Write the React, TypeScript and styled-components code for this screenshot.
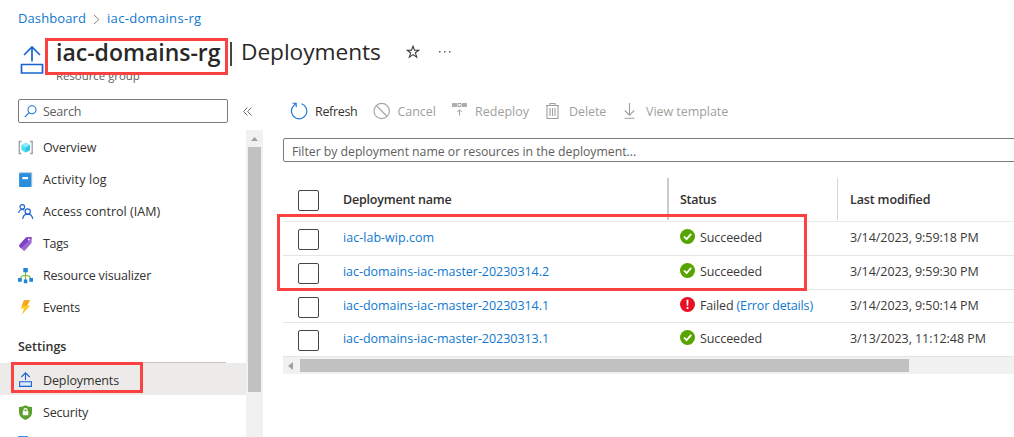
import React from 'react';
import styled, { createGlobalStyle, css } from 'styled-components';

const Global = createGlobalStyle`
  * { box-sizing: border-box; }
  body { margin: 0; background: #fff; overflow: hidden; }
`;

const Page = styled.div`
  position: relative;
  width: 1014px;
  height: 437px;
  overflow: hidden;
  display: flex;
  flex-direction: column;
  background: #fff;
  color: #323130;
  font: 12.5px/16px 'Open Sans', 'Noto Sans', sans-serif;
  white-space: nowrap;
`;

const Text = styled.span<{ $track?: number }>`
  letter-spacing: ${p => p.$track ?? 0}px;
`;

const Link = styled(Text)`
  color: #0f78d0;
`;

const Breadcrumb = styled.nav`
  display: flex;
  align-items: center;
  height: 36px;
  padding-left: 18px;
  font-size: 13px;
`;

const Chevron = styled.svg`
  margin: 2px 7px 0 7px;
`;

const TitleBar = styled.header`
  display: flex;
  height: 58px;
  padding-left: 20px;
`;

const TitleIcon = styled.svg`
  margin: 8px 12px 0 0;
`;

const TitleBlock = styled.div`
  display: flex;
  flex-direction: column;
`;

const TitleLine = styled.h1`
  display: flex;
  align-items: center;
  height: 32px;
  margin: 0;
  font-size: 22.7px;
  line-height: 32px;
  font-weight: 400;
  color: #292827;
`;

const Name = styled.span`
  width: 173px;
  font-size: 23px;
  font-weight: 600;
`;

const Divider = styled.i`
  width: 2px;
  height: 24px;
  margin: 3px 9px 0 1px;
  background: #4a4440;
`;

const Subtitle = styled.div`
  font-size: 11.4px;
  line-height: 16px;
  color: #605e5c;
`;

const Body = styled.div`
  display: flex;
  flex: 1;
  min-height: 0;
`;

const Sidebar = styled.aside`
  display: flex;
  flex-direction: column;
  width: 263px;
`;

const SearchRow = styled.div`
  display: flex;
  align-items: center;
  height: 36px;
  padding: 0 0 2px 18px;
`;

const SearchBox = styled.div`
  display: flex;
  align-items: center;
  gap: 6px;
  width: 210px;
  height: 24px;
  margin-right: 15px;
  padding: 1px 0 0 5px;
  border: 1px solid #7d7b79;
  border-radius: 2px;
  color: #605e5c;
`;

const MenuArea = styled.div`
  display: flex;
  flex: 1;
  min-height: 0;
`;

const Menu = styled.div`
  width: 246px;
  padding-top: 1px;
  overflow: hidden;
`;

const MenuItem = styled.div<{ $active?: boolean; $top?: number }>`
  display: flex;
  align-items: center;
  gap: 9px;
  height: 32px;
  padding: ${p => p.$top ?? 2}px 0 0 18px;
  background: ${p => (p.$active ? '#edebe9' : 'transparent')};
  > svg { margin-top: -1px; }
`;

const MenuHeading = styled.div`
  height: 40px;
  margin: 0 20px 0 18px;
  padding-top: 16px;
  border-bottom: 1px solid #c4c2c0;
  font-weight: 600;
`;

const VScroll = styled.div`
  display: flex;
  flex-direction: column;
  align-items: center;
  width: 17px;
  background: #f1f1f1;
`;

const VThumb = styled.div`
  width: 13px;
  height: 245px;
  margin-top: 6px;
  background: #c1c1c1;
`;

const Content = styled.main`
  display: flex;
  flex-direction: column;
  flex: 1;
  min-width: 0;
  padding-left: 20px;
`;

const Toolbar = styled.div`
  display: flex;
  align-items: center;
  height: 44px;
  padding: 0 0 9px 7px;
`;

const Command = styled.div<{ $width: number; $off?: boolean }>`
  display: flex;
  align-items: center;
  gap: 7px;
  width: ${p => p.$width}px;
  color: ${p => (p.$off ? '#a19f9d' : '#323130')};
  > svg { margin-top: -2px; }
`;

const Filter = styled.div`
  display: flex;
  align-items: center;
  flex: none;
  width: 740px;
  height: 24px;
  padding: 3px 0 0 8px;
  border: 1px solid #7d7b79;
  border-radius: 2px;
  font-size: 12.3px;
  color: #605e5c;
`;

const columns = css`
  display: grid;
  grid-template-columns: 60px 325px 170px 1fr;
`;

const HeadRow = styled.div`
  ${columns}
  height: 44px;
  margin-top: 16px;
  border-bottom: 1px solid #edebe9;
  font-weight: 600;
`;

const HeadCell = styled.div<{ $rule?: string; $thick?: number }>`
  padding: 14px 0 0 ${p => (p.$rule ? 13 - (p.$thick ?? 1) : 0)}px;
  margin-bottom: 1px;
  ${p => p.$rule && css`
    margin-left: -1px;
    border-left: ${p.$thick ?? 1}px solid ${p.$rule};
  `}
`;

const Row = styled.div<{ $height: number }>`
  ${columns}
  height: ${p => p.$height}px;
  border-bottom: 1px solid #e6e5e4;
`;

const Cell = styled.div<{ $inset?: number }>`
  display: flex;
  height: 16px;
  margin-top: 8px;
  padding-left: ${p => p.$inset ?? 0}px;
  color: #3b3a39;
`;

const Check = styled.div<{ $top: number }>`
  width: 21px;
  height: 21px;
  margin: ${p => p.$top}px 0 0 15px;
  border: 1px solid #484644;
  border-radius: 2px;
`;

const StatusMark = styled.svg`
  margin: -1px 5px 0 0;
`;

const HScroll = styled.div`
  display: flex;
  align-items: center;
  height: 17px;
  padding-left: 5px;
  background: #f1f1f1;
`;

const HThumb = styled.div`
  width: 609px;
  height: 13px;
  margin-left: 7px;
  background: #c1c1c1;
`;

const Highlight = styled.div<{ $x: number; $y: number; $w: number; $h: number }>`
  position: absolute;
  left: ${p => p.$x}px;
  top: ${p => p.$y}px;
  width: ${p => p.$w}px;
  height: ${p => p.$h}px;
  border: 3px solid #fc4141;
`;

const Overview = () => (
  <svg width="16" height="16" viewBox="0 0 16 16">
    <path d="M3.500 1.500H1.300v12h2.200M12 1.500h2.200v12H12" fill="none" stroke="#a3a3a3" strokeWidth="1.400" />
    <path d="M7.700 2.700l4.300 2.400v5l-4.300 2.500-4.300-2.500v-5z" fill="#4fdcf7" />
    <path d="M7.700 2.700l4.300 2.400-4.300 2.500-4.300-2.500z" fill="#8becfc" />
    <path d="M7.700 7.600l4.300-2.500v5l-4.300 2.500z" fill="#32c3e8" />
  </svg>
);
const Log = () => (
  <svg width="16" height="16" viewBox="0 0 16 16">
    <rect x="1.200" y=".3" width="13" height="14.700" rx="1" fill="#9dbdd6" />
    <rect x="1.200" y="1.300" width="11.800" height="13.700" rx=".8" fill="#2b8edc" />
    <rect x="4.300" y="5" width="5.700" height="2.200" fill="#fff" />
  </svg>
);
const Access = () => (
  <svg width="16" height="16" viewBox="0 0 16 16" fill="none" stroke="#1f66d6" strokeWidth="1.200">
    <circle cx="4.300" cy="2.900" r="2.300" />
    <path d="M.7 9C1 7 2.300 5.500 4.300 5.500q1.200 0 2 .6" />
    <circle cx="9.700" cy="7.500" r="2.600" />
    <path d="M4.700 15c.3-3 2.200-4.800 5-4.800s4.600 1.800 5 4.800" />
  </svg>
);
const Tag = () => (
  <svg width="16" height="16" viewBox="0 0 16 16">
    <path d="M8 1.600L12.700.9q1 0 1 1l-.2 5.200-6.500 7.300q-.8.700-1.600 0L1.400 10.500q-.7-.8 0-1.600z" fill="#9d68d4" />
    <path d="M8 1.600L12.700.9q1 0 1 1L3 12.200 1.400 10.500q-.7-.8 0-1.600z" fill="#7c42c2" />
    <circle cx="10.800" cy="3.500" r=".9" fill="#fff" />
  </svg>
);
const Visualizer = () => (
  <svg width="16" height="16" viewBox="0 0 16 16">
    <path d="M7.500 4v8M2.500 11c0-3 2-3.700 5-3.700s5 .7 5 3.700" fill="none" stroke="#7fc241" strokeWidth="1.200" />
    <path d="M5.300 0h4.500v4.300H5.300zM0 10h3.800v3.700H0zM5.800 11.500h3.500v3.700H5.800zM11.300 10H15v3.700h-3.700z" fill="#2086dc" />
  </svg>
);
const Bolt = () => (
  <svg width="16" height="16" viewBox="0 0 16 16">
    <path d="M6 .2h6L9 5.500h3.300L3.500 15l2.700-6.500H2.700z" fill="#fbc91d" />
    <path d="M6 .2h6L9 5.500H4z" fill="#f9a21d" />
  </svg>
);
const Upload = () => (
  <svg width="16" height="16" viewBox="0 0 16 16" fill="none" stroke="#1763d6" strokeWidth="1.100">
    <path d="M7.500 8V.8M3.300 5L7.500.8 11.700 5" />
    <path d="M1.600 9.800h11.800v4.600H1.600z" fill="#dfeafa" />
  </svg>
);
const Shield = () => (
  <svg width="16" height="16" viewBox="0 0 16 16">
    <path d="M7.500.3Q10.500 2.300 14 2.100v5.400q0 4.500-6.500 7.500Q1 12 1 7.500V2.100Q4.500 2.300 7.500.3z" fill="#5ba02e" />
    <path d="M5.900 7V5.200a1.600 1.600 0 013.200 0V7" fill="none" stroke="#fff" strokeWidth="1.100" />
    <rect x="4.700" y="6.300" width="5.600" height="4" rx=".5" fill="#fff" />
  </svg>
);
const Blue = () => (
  <svg width="16" height="16" viewBox="0 0 16 16"><path d="M0 1h10v14H0z" fill="#3a96e0" /></svg>
);

const icon18 = { width: 18, height: 18, viewBox: '0 0 18 18', fill: 'none' };
const Refresh = () => (
  <svg {...icon18} stroke="#1a73d8" strokeWidth="1.100">
    <path d="M11.500 1.800A7.700 7.700 0 112.900 4.600M6.200 1v4.200M6.500 1.200H2.500M6.200 1.200L2.900 4.600" />
  </svg>
);
const Cancel = () => (
  <svg {...icon18} stroke="#a9a7a5" strokeWidth="1.200">
    <circle cx="8.700" cy="9" r="7.700" /><path d="M3.300 3.500l10.900 11" />
  </svg>
);
const Redeploy = () => (
  <svg {...icon18}>
    <path d="M2 1h5v4H2zM12 1h5v4h-5z" fill="#b0aeac" />
    <path d="M8 1.500h3v3H8zM9.500 13.500V8M7.300 10l2.200-2.200 2.200 2.200" stroke="#a19f9d" />
  </svg>
);
const Trash = () => (
  <svg {...icon18} stroke="#a19f9d" strokeWidth="1.100">
    <path d="M2 3.500h13M6 3.200V1.500h5v1.700M3 3.500v13h11v-13M6 6v8M8.500 6v8M11 6v8" />
  </svg>
);
const Download = () => (
  <svg {...icon18} stroke="#a19f9d" strokeWidth="1.100">
    <path d="M8.500 1v12.200M3.800 8.500l4.700 4.700 4.700-4.700M3.500 16.200h10" />
  </svg>
);

const menu = [
  { label: 'Overview', icon: <Overview />, track: -0.12 },
  { label: 'Activity log', icon: <Log />, track: 0.12 },
  { label: 'Access control (IAM)', icon: <Access />, track: 0.02 },
  { label: 'Tags', icon: <Tag />, track: -0.3 },
  { label: 'Resource visualizer', icon: <Visualizer />, track: -0.18 },
  { label: 'Events', icon: <Bolt />, track: -0.2 },
];

const commands = [
  { label: 'Refresh', icon: <Refresh />, width: 82.500, track: -0.32 },
  { label: 'Cancel', icon: <Cancel />, width: 77.500, track: -0.05, off: true },
  { label: 'Redeploy', icon: <Redeploy />, width: 94, track: 0, off: true },
  { label: 'Delete', icon: <Trash />, width: 77, track: -0.08, off: true },
  { label: 'View template', icon: <Download />, width: 120, track: -0.05, off: true },
];

const rows = [
  { name: 'iac-lab-wip.com', ok: true, date: '3/14/2023, 9:59:18 PM', height: 34, track: 0.03 },
  { name: 'iac-domains-iac-master-20230314.2', ok: true, date: '3/14/2023, 9:59:30 PM', height: 34, track: -0.04 },
  { name: 'iac-domains-iac-master-20230314.1', ok: false, date: '3/14/2023, 9:50:14 PM', height: 33, track: -0.04 },
  { name: 'iac-domains-iac-master-20230313.1', ok: true, date: '3/13/2023, 11:12:48 PM', height: 34, track: -0.04 },
];

const Mark = ({ ok }: { ok: boolean }) => (
  <StatusMark width="15" height="15" viewBox="0 0 15 15">
    <circle cx="7.500" cy="7.500" r="7.500" fill={ok ? '#57a300' : '#e81123'} />
    {ok
      ? <path d="M4 7.500l2.600 2.700 4.600-5.400" fill="none" stroke="#fff" strokeWidth="1.800" />
      : <path d="M6.500 2.800h2l-.3 5.900H6.800zM6.600 10h1.800v1.900H6.600z" fill="#fff" />}
  </StatusMark>
);

const Star = styled.svg`
  margin-left: 25px;
`;

const Dots = styled.svg`
  margin-left: 18px;
`;

const ScrollUp = styled.svg`
  margin-top: 7px;
`;

export default function App() {
  return (
    <Page>
      <Global />
      <Breadcrumb>
        <Link $track={0.1}>Dashboard</Link>
        <Chevron width="7" height="11" viewBox="0 0 7 11"><path d="M1 1l5 4.500L1 10" fill="none" stroke="#8a8886" /></Chevron>
        <Link $track={0.32}>iac-domains-rg</Link>
      </Breadcrumb>
      <TitleBar>
        <TitleIcon width="24" height="30" viewBox="0 0 24 30" fill="none" stroke="#1763d6" strokeWidth="1.700">
          <path d="M12 17.500V3M4 11l8-8 8 8M1.500 20.500h21v8.500h-21z" />
        </TitleIcon>
        <TitleBlock>
          <TitleLine>
            <Name>iac-domains-rg</Name>
            <Divider />
            <Text $track={-0.05}>Deployments</Text>
            <Star width="14" height="14" viewBox="0 0 14 14" fill="none" stroke="#3b3a39" strokeWidth="1.100">
              <path d="M7 1.200l1.500 4h4.300L9.400 7.800l1.300 4.400L7 9.600l-3.700 2.600 1.300-4.400L1.200 5.200h4.300z" />
            </Star>
            <Dots width="14" height="4" viewBox="0 0 14 4" fill="#605e5c">
              <path d="M1 1h1.500v1.500H1zM6 1h1.500v1.500H6zM11 1h1.500v1.500H11z" />
            </Dots>
          </TitleLine>
          <Subtitle>Resource group</Subtitle>
        </TitleBlock>
      </TitleBar>
      <Body>
        <Sidebar>
          <SearchRow>
            <SearchBox>
              <svg width="13" height="13" viewBox="0 0 13 13" fill="none" stroke="#1a78d0" strokeWidth="1.100">
                <circle cx="8" cy="4.800" r="4" /><path d="M5.200 7.700L.8 12" />
              </svg>
              <Text $track={-0.25}>Search</Text>
            </SearchBox>
            <svg width="9" height="9" viewBox="0 0 9 9" fill="none" stroke="#605e5c" strokeWidth=".9">
              <path d="M4.300.5l-3.600 4 3.600 4M8.300.5l-3.600 4 3.600 4" />
            </svg>
          </SearchRow>
          <MenuArea>
            <Menu>
              {menu.map(m => (
                <MenuItem key={m.label}>{m.icon}<Text $track={m.track}>{m.label}</Text></MenuItem>
              ))}
              <MenuHeading>Settings</MenuHeading>
              <MenuItem $active $top={3}><Upload /><Text $track={-0.12}>Deployments</Text></MenuItem>
              <MenuItem $top={4}><Shield /><Text $track={-0.18}>Security</Text></MenuItem>
              <MenuItem $top={1}><Blue /></MenuItem>
            </Menu>
            <VScroll>
              <ScrollUp width="7" height="4" viewBox="0 0 7 4"><path d="M0 4l3.500-4L7 4z" fill="#a0a0a0" /></ScrollUp>
              <VThumb />
            </VScroll>
          </MenuArea>
        </Sidebar>
        <Content>
          <Toolbar>
            {commands.map(c => (
              <Command key={c.label} $width={c.width} $off={c.off}>{c.icon}<Text $track={c.track}>{c.label}</Text></Command>
            ))}
          </Toolbar>
          <Filter><Text $track={-0.04}>Filter by deployment name or resources in the deployment...</Text></Filter>
          <HeadRow>
            <Check $top={12} />
            <HeadCell><Text $track={-0.2}>Deployment name</Text></HeadCell>
            <HeadCell $rule="#cbcbcb" $thick={2}><Text $track={-0.3}>Status</Text></HeadCell>
            <HeadCell $rule="#d6d6d6"><Text $track={-0.14}>Last modified</Text></HeadCell>
          </HeadRow>
          {rows.map(r => (
            <Row key={r.name} $height={r.height}>
              <Check $top={7} />
              <Cell><Link $track={r.track}>{r.name}</Link></Cell>
              <Cell $inset={12}>
                <Mark ok={r.ok} />
                {r.ok
                  ? <Text $track={-0.08}>Succeeded</Text>
                  : <><Text $track={-0.15}>Failed&nbsp;</Text><Link $track={-0.16}>(Error details)</Link></>}
              </Cell>
              <Cell $inset={12}><Text $track={-0.06}>{r.date}</Text></Cell>
            </Row>
          ))}
          <HScroll>
            <svg width="5" height="8" viewBox="0 0 5 8"><path d="M5 0v8L0 4z" fill="#a0a0a0" /></svg>
            <HThumb />
          </HScroll>
        </Content>
      </Body>
      <Highlight $x={45} $y={38} $w={183} $h={37} />
      <Highlight $x={11} $y={362} $w={132} $h={31} />
      <Highlight $x={277} $y={214} $w={530} $h={77} />
    </Page>
  );
}
